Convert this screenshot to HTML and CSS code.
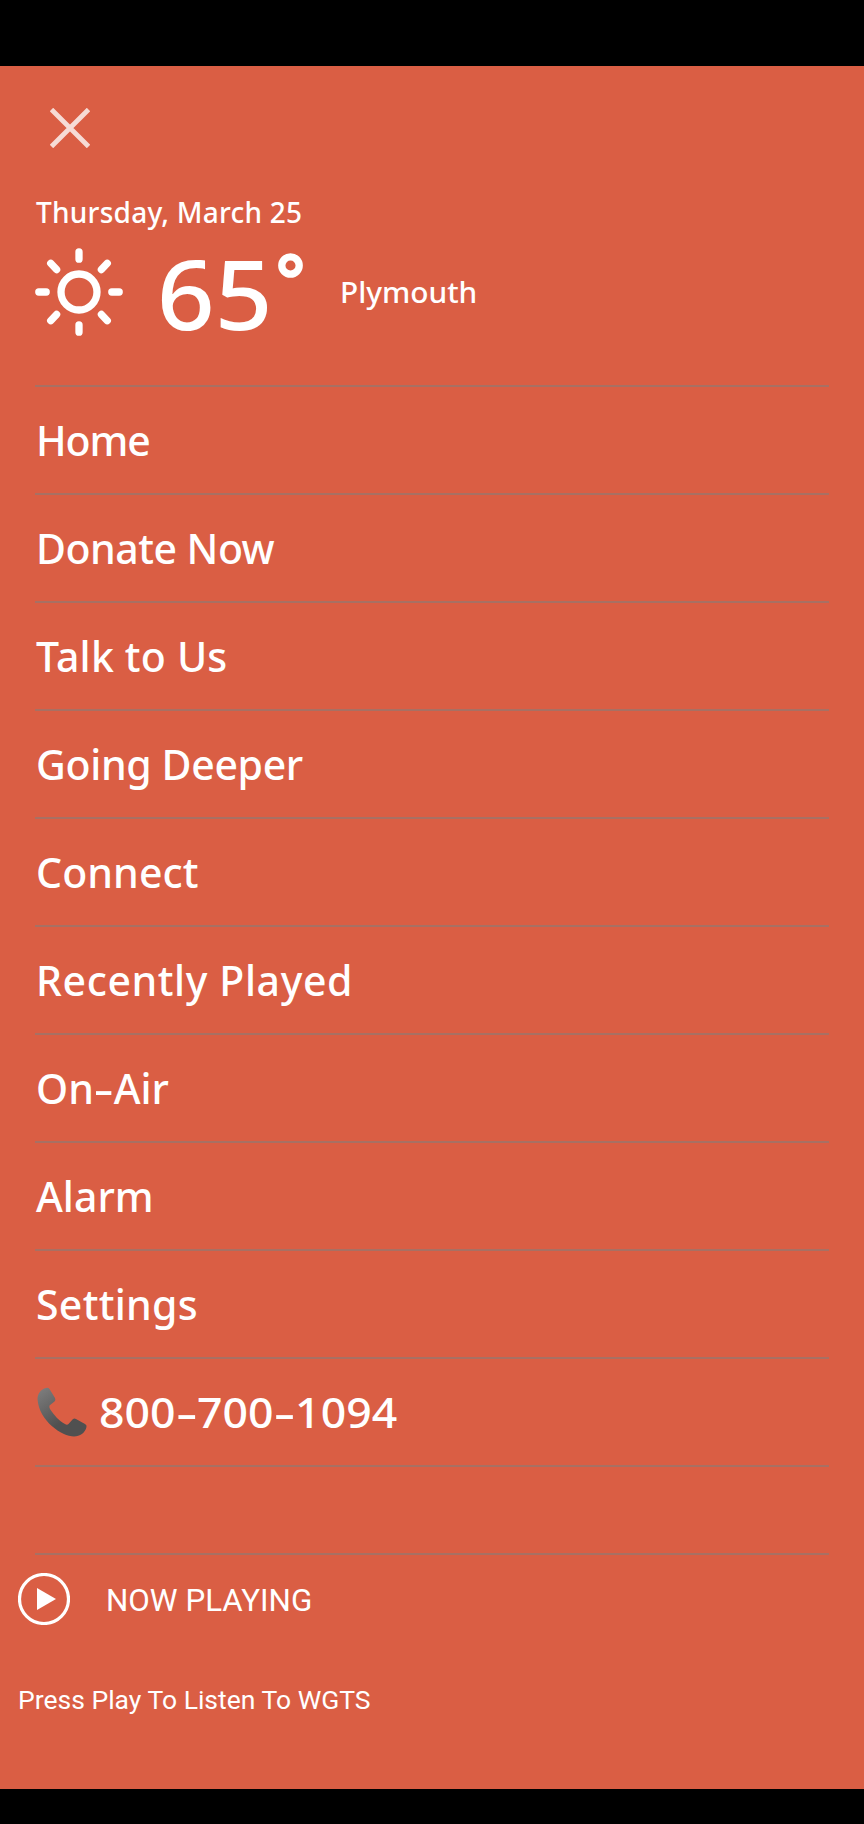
FILE: index.html
```html
<!DOCTYPE html>
<html lang="en"><head><meta charset="utf-8"><title>Menu</title><link rel="stylesheet" href="styles.css"></head>
<body>
<main class="panel">
  <button class="close" aria-label="Close"><svg width="40" height="40" viewBox="0 0 40 40"><path d="M1.500 1.500 38.500 38.500M38.500 1.500 1.500 38.500"/></svg></button>
  <header class="weather">
    <p class="date">Thursday, March 25</p>
    <div class="now">
      <svg class="sun" width="88" height="88" viewBox="-44 -44 88 88"><circle r="18"/><path d="M0-40.2V-32.8M0 32.8V40.2M-40.2 0H-32.8M32.8 0H40.2M-28.3-28.7-22.4-22.4M28.3-28.7 22.4-22.4M-28.3 28.7-22.4 22.4M28.3 28.7 22.4 22.4"/></svg>
      <span class="temp">65</span>
      <svg class="degree" width="25" height="25" viewBox="0 0 25 25"><circle cx="12.5" cy="12.5" r="8.7"/></svg>
      <span class="city">Plymouth</span>
    </div>
  </header>
  <nav class="menu">
    <a class="item home">Home</a>
    <a class="item donate">Donate Now</a>
    <a class="item talk">Talk to Us</a>
    <a class="item deeper">Going Deeper</a>
    <a class="item connect">Connect</a>
    <a class="item recent">Recently Played</a>
    <a class="item onair"><span>On<span class="dash">-</span>Air</span></a>
    <a class="item alarm">Alarm</a>
    <a class="item settings">Settings</a>
    <a class="item phone"><svg class="handset" width="50" height="50" viewBox="0 0 50 50"><defs><linearGradient id="g" x1="0" y1="0" x2=".5" y2=".7"><stop offset="0" stop-color="#808080"/><stop offset="1" stop-color="#505050"/></linearGradient></defs><path fill="url(#g)" d="M9 1Q11 0 12.500 2L18 11Q19 13 17.500 14.500L12.500 18.500Q12 20 13 22C17 28 22 34 28 37Q30 38.500 31.500 37L36 32Q37.500 31 39 32L48 37Q50 38 49.500 40C48 46 43 49.500 37 49.500C25 49.500 2 34 .5 12C.5 7 4 2 9 1Z"/></svg><span class="number">800<span class="dash">-</span>700<span class="dash">-</span>1094</span></a>
  </nav>
  <footer class="player">
    <div class="playing">
      <svg width="52" height="52" viewBox="0 0 52 52"><circle cx="26" cy="26" r="24.500" fill="none" stroke="#fff" stroke-width="3.2"/><path fill="#fff" d="M19 15 38 26 19 37Z"/></svg>
      <span class="label">NOW PLAYING</span>
    </div>
    <p class="hint">Press Play To Listen To WGTS</p>
  </footer>
</main>
</body></html>
```
FILE: styles.css
```css
* { box-sizing: border-box; }
body { margin: 0; background: #000; color: #fff; font-family: "Noto Sans", sans-serif; font-weight: 500; white-space: nowrap; }
p { margin: 0; }
svg { display: block; flex: none; }
.panel { margin-top: 66px; height: 1723px; background: #da5e44; padding-top: 42px; overflow: hidden; }
.close { display: block; margin: 0 0 0 50px; padding: 0; border: 0; background: none; }
.close path { fill: none; stroke: #f6dbd5; stroke-width: 4.8; }
.weather { margin-left: 35px; height: 237px; padding-top: 44px; }
.date { font-size: 28px; line-height: 40px; letter-spacing: .25px; padding-left: 1px; }
.now { display: flex; height: 115px; margin-top: 16px; }
.sun, .degree circle { fill: none; stroke: #fff; stroke-width: 7.3; }
.sun { stroke-linecap: round; }
.temp { width: 119px; font-size: 97px; line-height: 100px; transform: scaleX(1.04); transform-origin: left; margin: -6px 0 0 34px; }
.degree { margin: 5px 0 0 2px; }
.city { font-size: 28px; line-height: 40px; transform: scaleX(1.065); transform-origin: left; margin: 24px 0 0 37px; }
.menu { margin: 0 35px; border-top: 2px solid #a87063; border-bottom: 2px solid #a87063; height: 1170px; }
.item { display: flex; height: 108px; padding-left: 1px; border-bottom: 2px solid #a87063; font-size: 41px; line-height: 106px; }
.home { letter-spacing: -1.1px; }
.donate { letter-spacing: -.5px; }
.talk { letter-spacing: .2px; }
.deeper { letter-spacing: -.35px; }
.connect { letter-spacing: .1px; }
.recent { letter-spacing: .6px; }
.settings { letter-spacing: .3px; }
.number { transform: scaleX(1.088); transform-origin: left; }
.dash { display: inline-block; margin: 0 3.3px; transform: scaleX(1.5); }
.handset { margin: 28px 12px 0 1px; }
.player { padding: 18px 0 0 18px; font-family: Roboto, sans-serif; font-weight: 400; }
.playing { display: flex; }
.label { font-size: 31.300px; line-height: 40px; margin: 8px 0 0 36px; }
.hint { font-size: 26.500px; line-height: 40px; margin-top: 55px; }
```
